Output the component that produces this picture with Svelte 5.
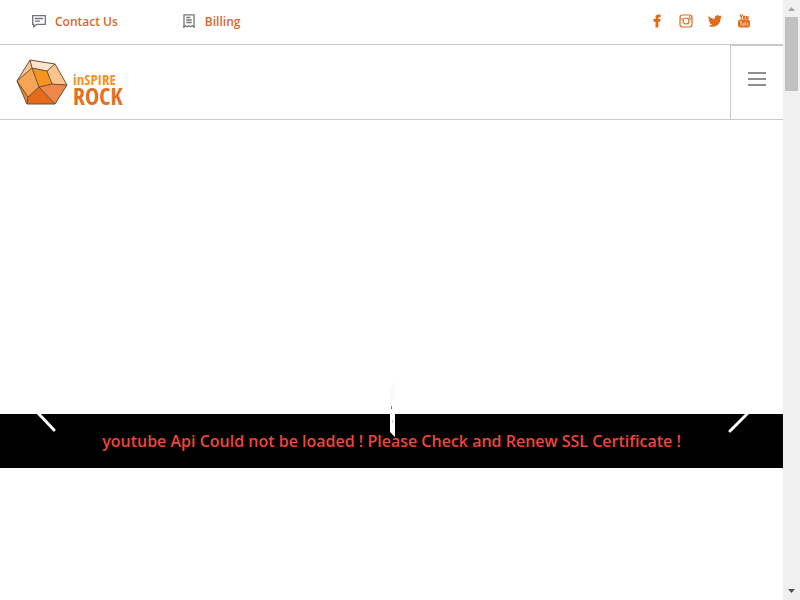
<script lang="ts">
	let menuOpen = $state(false);
	let slide = $state(0);

	const links = [
		{ label: 'Contact Us', icon: 'chat' },
		{ label: 'Billing', icon: 'receipt' }
	];

	const socials = ['Facebook', 'Instagram', 'Twitter', 'YouTube'];
</script>

<div class="page">
	<div class="content">
		<div class="topbar">
			<nav class="topbar__links">
				{#each links as link}
					<a class="topbar__link" href="#{link.icon}">
						<svg class="topbar__icon" viewBox="0 0 14 14" aria-hidden="true">
							{#if link.icon === 'chat'}
								<path d="M.7 1.7h12.6v8.6H4.6L1.7 12.8v-2.5h-1z" />
								<path d="M3 4.5h8M3 7.2h5" />
							{:else}
								<path d="M2 .8h10v12l-1.7-1-1.6 1-1.7-1-1.7 1-1.6-1-1.7 1z" />
								<path d="M4.3 3.5h4M4.3 6h5.4M4.3 8.5h5.4M1 12.8h2M11 12.8h2" />
							{/if}
						</svg>
						{link.label}
					</a>
				{/each}
			</nav>
			<div class="topbar__socials">
				{#each socials as social}
					<a class="social" href="#{social}" aria-label={social}>
						<svg viewBox="0 0 14 14" aria-hidden="true">
							{#if social === 'Facebook'}
								<path d="M5.5 13.5V7.7H3.5V4.9h2V3.4C5.5 1.5 6.5.5 8.4.5h2.2v2.7H9.3c-.6 0-.9.3-.9.9v.8h2.2l-.4 2.8H8.4v5.8z" />
							{:else if social === 'Instagram'}
								<rect class="line" x="1" y="1" width="12" height="12" rx="2.5" />
								<circle class="line" cx="7" cy="7" r="3" />
								<path class="line" d="M1 5h3.2M9.8 5H13" />
								<circle cx="10.7" cy="3.2" r=".9" />
							{:else if social === 'Twitter'}
								<path d="M.8 1.9C2.3 3.7 4.3 4.7 6.7 4.8 6.3 2.9 7.7 1.2 9.6 1.2c.9 0 1.6.3 2.1.9l1.8-.6-.9 1.6 1.4-.3-1.4 1.5c.1 4.6-3.3 8.5-7.8 8.5-1.7 0-3.3-.5-4.4-1.3 1.5.1 2.8-.3 3.8-1.1-1.3-.1-2.2-.9-2.6-2h1.2C1.4 8 .6 6.9.6 5.5l1.3.4C.5 4.9.1 3.3.8 1.9z" />
							{:else}
								<path class="line" d="M3 .6l1.3 2.4L5.6.6M4.3 3v2.2M6.5 2.3h1.3v2.3H6.5zM9.5 2v2.6h1.5V2" />
								<rect x="1" y="5.5" width="12" height="8" rx="2.5" />
								<path class="cut" d="M2.7 7.7h2.4M3.9 7.7v4M5.8 8.8v2.5h1.3V8.8M8.5 7.5v3.8h1M11.5 9h-1v2.3h1" />
							{/if}
						</svg>
					</a>
				{/each}
			</div>
		</div>

		<header class="header">
			<a class="logo" href="#home" aria-label="inSPIRE ROCK">
				<svg class="logo__rock" viewBox="0 0 52 46" aria-hidden="true">
					<path fill="#f7a555" d="M16 9l7 19-11 10L1 22z" />
					<path fill="#f7941e" d="M16 9l15 3 5 13-13 3z" />
					<path fill="#fde3c8" d="M14 1l25 4-8 7-15-3z" />
					<path fill="#fbc58c" d="M39 5l12 21-15-1-5-13z" />
					<path fill="#ee8749" d="M23 28l13-3 15 1-12 19z" />
					<path fill="#e56b1a" d="M23 28l16 17H11l1-7z" />
					<path fill="#e9823c" d="M1 22l11 16-1 7z" />
					<path fill="#fbc58c" d="M14 1l2 8L1 22z" />
					<path
						class="logo__edges"
						d="M14 1l25 4 12 21-12 19H11L1 22zM14 1l2 8 15 3 8-7M16 9L1 22l11 16-1 7M16 9l7 19 13-3-5-13M36 25l15 1M12 38l11-10 16 17"
					/>
				</svg>
				<span class="logo__text">
					<span class="logo__small">inSPIRE</span>
					<span class="logo__large">ROCK</span>
				</span>
			</a>
			<button
				class="toggle"
				aria-label="Menu"
				aria-expanded={menuOpen}
				onclick={() => (menuOpen = !menuOpen)}
			>
				<span class="toggle__bar"></span>
				<span class="toggle__bar"></span>
				<span class="toggle__bar"></span>
			</button>
		</header>

		<main class="hero">
			<div class="banner">
				<button class="arrow arrow--prev" aria-label="Previous" onclick={() => slide--}>
					<svg viewBox="0 0 22 40" aria-hidden="true"><path d="M19 36L2 18 19 1" /></svg>
				</button>
				<p class="banner__text">
					youtube Api Could not be loaded ! Please Check and Renew SSL Certificate !
				</p>
				<svg class="loader" viewBox="0 0 10 60" aria-hidden="true">
					<path fill="#f9f9f9" d="M2 12l5-10v18l-5 8z" />
					<path fill="#fff" d="M2 30l5-8v37l-5-5z" />
					<path fill="#777" d="M3 28h1v3H3z" />
					<path fill="#ccc" d="M4 42h1v3H4zM3 35h1v1H3z" />
				</svg>
				<button class="arrow arrow--next" aria-label="Next" onclick={() => slide++}>
					<svg viewBox="0 0 22 40" aria-hidden="true"><path d="M3 37l17-17L3 3" /></svg>
				</button>
			</div>
		</main>
	</div>

	<div class="scrollbar" aria-hidden="true">
		<svg class="scrollbar__arrow" viewBox="0 0 17 17"><path fill="#a3a3a3" d="M5 11l3.5-4 3.5 4z" /></svg>
		<div class="scrollbar__track"><div class="scrollbar__thumb"></div></div>
		<svg class="scrollbar__arrow" viewBox="0 0 17 17"><path fill="#505050" d="M5 6h7l-3.5 4z" /></svg>
	</div>
</div>

<style>
	:global(body) {
		margin: 0;
		background: #fff;
		font-family: 'Open Sans', sans-serif;
	}

	.page {
		--orange: #df6b1d;
		--line: #c8c8c8;
		display: flex;
		height: 100vh;
	}

	.content {
		flex: 1;
		min-width: 0;
	}

	.topbar {
		display: flex;
		justify-content: space-between;
		align-items: center;
		height: 42px;
		padding: 0 32px 2px;
		border-bottom: 1px solid var(--line);
	}

	.topbar__links {
		display: flex;
		gap: 64px;
	}

	.topbar__link {
		display: flex;
		align-items: center;
		gap: 9px;
		color: #d4682f;
		font-size: 12px;
		font-weight: 600;
		text-decoration: none;
	}

	.topbar__icon {
		width: 14px;
		height: 14px;
		fill: none;
		stroke: #73747a;
		stroke-width: 1.3;
	}

	.topbar__socials {
		display: flex;
		gap: 15px;
	}

	.social {
		display: block;
		width: 14px;
		height: 14px;
		color: var(--orange);
	}

	.social svg {
		display: block;
		fill: currentColor;
	}

	.social .line {
		fill: none;
		stroke: currentColor;
		stroke-width: 1.2;
	}

	.social .cut {
		fill: none;
		stroke: #fbd9c4;
		stroke-width: 0.8;
	}

	.header {
		display: flex;
		justify-content: space-between;
		height: 74px;
		border-bottom: 1px solid var(--line);
	}

	.logo {
		display: flex;
		align-items: center;
		gap: 5px;
		padding-left: 16px;
		text-decoration: none;
	}

	.logo__rock {
		width: 52px;
		height: 46px;
	}

	.logo__edges {
		fill: none;
		stroke: #6b4c38;
		stroke-width: 1;
		stroke-linejoin: round;
	}

	.logo__text {
		display: flex;
		flex-direction: column;
		padding-top: 14px;
		font-family: 'Open Sans Condensed', 'Liberation Sans Narrow', 'Liberation Sans', sans-serif;
		font-weight: 700;
	}

	.logo__small {
		color: #f39427;
		font-size: 15px;
		line-height: 14px;
	}

	.logo__large {
		color: #e27124;
		font-size: 24px;
		line-height: 20px;
	}

	.toggle {
		display: flex;
		flex-direction: column;
		align-items: center;
		justify-content: center;
		gap: 4px;
		width: 53px;
		padding: 0 0 8px;
		border: 0;
		border-top: 1px solid var(--line);
		border-left: 1px solid var(--line);
		background: none;
		cursor: pointer;
	}

	.toggle__bar {
		width: 18px;
		height: 2px;
		background: #8e8e93;
	}

	.hero {
		padding-top: 294px;
	}

	.banner {
		position: relative;
		background: #000;
	}

	.banner__text {
		margin: 0;
		padding: 15px 24px;
		color: #f04438;
		font-size: 16px;
		font-weight: 600;
		line-height: 24px;
		text-align: center;
	}

	.arrow {
		position: absolute;
		top: -20px;
		width: 22px;
		height: 40px;
		padding: 0;
		border: 0;
		background: none;
		cursor: pointer;
	}

	.arrow--prev {
		left: 35px;
	}

	.arrow--next {
		right: 34px;
	}

	.arrow svg {
		display: block;
		fill: none;
		stroke: #fff;
		stroke-width: 3;
		stroke-linecap: round;
	}

	.loader {
		position: absolute;
		top: -36px;
		left: calc(50% - 4px);
		width: 10px;
		height: 60px;
	}

	.scrollbar {
		display: flex;
		flex-direction: column;
		width: 17px;
		background: #f0f0f0;
	}

	.scrollbar__arrow {
		width: 17px;
		height: 17px;
	}

	.scrollbar__track {
		flex: 1;
		padding: 0 2px;
	}

	.scrollbar__thumb {
		height: 13%;
		background: #c1c1c1;
	}
</style>
